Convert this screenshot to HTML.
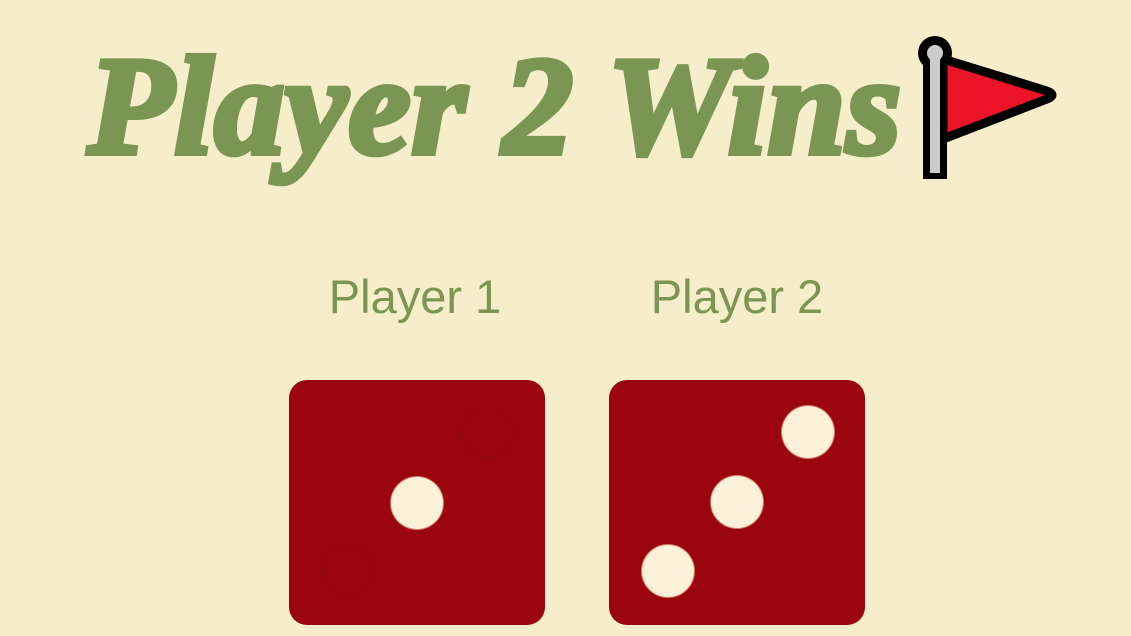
<!DOCTYPE html>
<html><head><meta charset="utf-8"><style>
html,body{margin:0;padding:0}
body{width:1131px;height:636px;background:#f6eeca;position:relative;overflow:hidden;font-family:"Liberation Sans",sans-serif}
.title{position:absolute;left:60px;top:22px;width:870px;text-align:center;font-family:"Liberation Serif",serif;font-weight:bold;font-style:italic;font-size:140px;line-height:170px;color:#7a9652;white-space:nowrap;letter-spacing:1px;-webkit-text-stroke:6px #7a9652}
.lab{position:absolute;top:268px;width:300px;text-align:center;font-size:47px;line-height:58px;color:#7a9652}
.die{position:absolute;top:380px;width:256px;height:245px;background:#9b050d;border-radius:18px}
.pip{position:absolute;width:52px;height:52px;border-radius:50%;background:#fbf1d8;box-shadow:0 0 0 1px #d8786a}
.ghost{position:absolute;width:52px;height:52px;border-radius:50%;border:1px solid #8e0a0c;box-sizing:border-box}
</style></head><body>
<div class="title">Player 2 Wins</div>
<svg style="position:absolute;left:915px;top:35px" width="145" height="150" viewBox="0 0 145 150">
<path d="M28 24 L132 56 Q142 60 132 64 L28 104 Z" fill="#ec1527" stroke="#000" stroke-width="9" stroke-linejoin="round"/>
<rect x="8" y="16" width="24" height="128" fill="#000"/>
<circle cx="20" cy="18" r="17" fill="#000"/>
<rect x="15" y="18" width="10" height="120" fill="#cccccc"/>
<circle cx="20" cy="18" r="8" fill="#cccccc"/>
</svg>
<div class="lab" style="left:265px">Player 1</div>
<div class="lab" style="left:587px">Player 2</div>
<div class="die" style="left:289px">
<div class="ghost" style="left:173px;top:27px"></div>
<div class="pip" style="left:102px;top:97px"></div>
<div class="ghost" style="left:33px;top:165px"></div>
</div>
<div class="die" style="left:609px">
<div class="pip" style="left:173px;top:26px"></div>
<div class="pip" style="left:102px;top:96px"></div>
<div class="pip" style="left:33px;top:165px"></div>
</div>
</body></html>
